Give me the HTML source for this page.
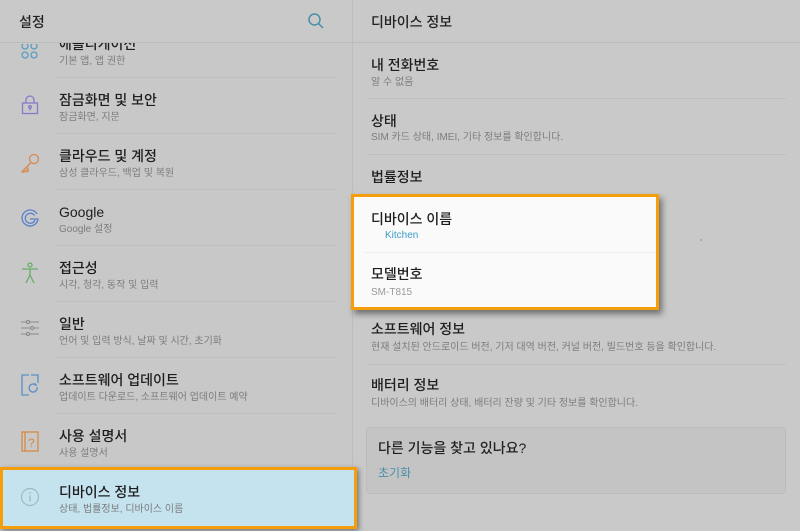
<!DOCTYPE html>
<html><head><meta charset="utf-8"><style>
*{margin:0;padding:0;box-sizing:border-box}
body{width:800px;height:531px;overflow:hidden;background:#c9c9c9;font-family:"Liberation Sans","Noto Sans CJK KR",sans-serif;position:relative}
.a{position:absolute;white-space:nowrap}
.t{font-size:14px;line-height:18px;padding-top:1px;color:#1e1e1e;font-weight:500}
.s{font-size:10px;line-height:13px;padding-top:2px;color:#7d7d7d}
.ln{position:absolute;height:1px;background:#bfbfbf}
.ic{position:absolute}
</style></head><body>
<div class="a" style="left:0;top:0;width:352px;height:531px;background:#c8c8c8"></div>
<div class="a" style="left:352px;top:0;width:1px;height:531px;background:#bdbdbd"></div>
<div class="a" style="left:0;top:43px;width:352px;height:488px;overflow:hidden">
 <div class="a t" style="left:59px;top:-9px">애플리케이션</div>
</div>
<div class="a" style="left:0;top:0;width:352px;height:43px;background:#c9c9c9;border-bottom:1px solid #bcbcbc"></div>
<div class="a" style="left:353px;top:0;width:447px;height:43px;background:#c9c9c9;border-bottom:1px solid #bcbcbc"></div>
<div class="a" style="left:19px;top:13px;font-size:14px;line-height:18px;color:#222;font-weight:500">설정</div>
<svg class="ic" style="left:307px;top:12px" width="18" height="18" viewBox="0 0 18 18"><circle cx="7.5" cy="7.5" r="5.5" fill="none" stroke="#4a8fa8" stroke-width="1.5"/><path d="M11.5 11.5L16 16" stroke="#4a8fa8" stroke-width="1.5"/></svg>
<div class="a" style="left:371px;top:13px;font-size:14px;line-height:18px;color:#222;font-weight:500">디바이스 정보</div>

<div class="a s" style="left:59px;top:53px">기본 앱, 앱 권한</div>
<svg class="ic" style="left:21px;top:44px" width="18" height="16"><g fill="none" stroke="#5a9dc0" stroke-width="1.3"><circle cx="4" cy="2" r="3"/><circle cx="13" cy="2" r="3"/><circle cx="4" cy="11" r="3"/><circle cx="13" cy="11" r="3"/></g></svg>
<div class="ln" style="left:56px;top:77px;width:280px"></div>
<div class="a t" style="left:59px;top:90px">잠금화면 및 보안</div><div class="a s" style="left:59px;top:109px">잠금화면, 지문</div>
<svg class="ic" style="left:21px;top:95px" width="18" height="20"><g fill="none" stroke="#8a78c8" stroke-width="1.3"><path d="M5 8V5a4 4 0 0 1 8 0v3"/><rect x="1.5" y="8" width="15" height="10.5"/><circle cx="9" cy="12" r="1.3"/><path d="M9 13v2.5"/></g></svg>
<div class="ln" style="left:56px;top:133px;width:280px"></div>
<div class="a t" style="left:59px;top:146px">클라우드 및 계정</div><div class="a s" style="left:59px;top:165px">삼성 클라우드, 백업 및 복원</div>
<svg class="ic" style="left:20px;top:153px" width="20" height="20"><g fill="none" stroke="#d48a55" stroke-width="1.3"><circle cx="14" cy="6" r="4.5"/><path d="M11 9.5L2 18.5l1.5 1 2-2 1.5 1.5 1.5-1.5-1.5-1.5 1.5-1.5"/></g></svg>
<div class="ln" style="left:56px;top:189px;width:280px"></div>
<div class="a t" style="left:59px;top:202px">Google</div><div class="a s" style="left:59px;top:221px">Google 설정</div>
<svg class="ic" style="left:20px;top:208px" width="20" height="20" viewBox="0 0 20 20"><g fill="none" stroke="#5a80c8" stroke-width="1.3"><path d="M17 6A8 8 0 1 0 18 11H10"/><path d="M14.5 7.5A5 5 0 1 0 15 12"/></g></svg>
<div class="ln" style="left:56px;top:245px;width:280px"></div>
<div class="a t" style="left:59px;top:258px">접근성</div><div class="a s" style="left:59px;top:277px">시각, 청각, 동작 및 입력</div>
<svg class="ic" style="left:20px;top:262px" width="20" height="22"><g fill="none" stroke="#6aaa6a" stroke-width="1.3"><circle cx="10" cy="3" r="2"/><path d="M2 7h16M10 7v6M6 21l4-8 4 8"/></g></svg>
<div class="ln" style="left:56px;top:301px;width:280px"></div>
<div class="a t" style="left:59px;top:314px">일반</div><div class="a s" style="left:59px;top:333px">언어 및 입력 방식, 날짜 및 시간, 초기화</div>
<svg class="ic" style="left:20px;top:319px" width="20" height="18"><g fill="none" stroke="#8a8a8a" stroke-width="1.1"><path d="M1 3h18M1 9h18M1 15h18"/><circle cx="8" cy="3" r="1.6" fill="#c8c8c8"/><circle cx="12" cy="9" r="1.6" fill="#c8c8c8"/><circle cx="8" cy="15" r="1.6" fill="#c8c8c8"/></g></svg>
<div class="ln" style="left:56px;top:357px;width:280px"></div>
<div class="a t" style="left:59px;top:370px">소프트웨어 업데이트</div><div class="a s" style="left:59px;top:389px">업데이트 다운로드, 소프트웨어 업데이트 예약</div>
<svg class="ic" style="left:21px;top:374px" width="18" height="22"><g fill="none" stroke="#5a90c8" stroke-width="1.3"><path d="M8 1H1v20h7M10 1h7v8"/><path d="M16 13a4 4 0 1 1-2-2.5"/><path d="M14 9l0 2 2 0"/></g></svg>
<div class="ln" style="left:56px;top:413px;width:280px"></div>
<div class="a t" style="left:59px;top:426px">사용 설명서</div><div class="a s" style="left:59px;top:445px">사용 설명서</div>
<svg class="ic" style="left:21px;top:431px" width="18" height="22"><g fill="none" stroke="#d48a45" stroke-width="1.3"><rect x="1" y="1" width="16" height="19"/><path d="M4 1v19"/></g><text x="7" y="16" font-size="12" fill="#d48a45" font-family="Liberation Sans">?</text></svg>

<div class="a" style="left:0;top:467px;width:357px;height:62px;background:#c4e3ef;border:3px solid #f59e0b;box-shadow:2px 2px 5px rgba(0,0,0,.4)"></div>
<div class="a t" style="left:59px;top:482px">디바이스 정보</div><div class="a s" style="left:59px;top:501px">상태, 법률정보, 디바이스 이름</div>
<svg class="ic" style="left:20px;top:487px" width="20" height="20"><circle cx="10" cy="10" r="8.5" fill="none" stroke="#a0b8c0" stroke-width="1.2"/><path d="M10 8.5v6" stroke="#a0b8c0" stroke-width="1.3"/><circle cx="10" cy="6" r=".9" fill="#a0b8c0"/></svg>

<div class="a t" style="left:371px;top:55px">내 전화번호</div><div class="a s" style="left:371px;top:74px">알 수 없음</div>
<div class="ln" style="left:368px;top:98px;width:418px"></div>
<div class="a t" style="left:371px;top:111px">상태</div><div class="a s" style="left:371px;top:129px">SIM 카드 상태, IMEI, 기타 정보를 확인합니다.</div>
<div class="ln" style="left:368px;top:154px;width:418px"></div>
<div class="a t" style="left:371px;top:167px">법률정보</div>
<div class="a" style="left:700px;top:239px;width:2px;height:2px;background:#aaa"></div>
<div class="a t" style="left:371px;top:319px">소프트웨어 정보</div><div class="a s" style="left:371px;top:339px">현재 설치된 안드로이드 버전, 기저 대역 버전, 커널 버전, 빌드번호 등을 확인합니다.</div>
<div class="ln" style="left:368px;top:364px;width:418px"></div>
<div class="a t" style="left:371px;top:375px">배터리 정보</div><div class="a s" style="left:371px;top:395px">디바이스의 배터리 상태, 배터리 잔량 및 기타 정보를 확인합니다.</div>
<div class="a" style="left:366px;top:427px;width:420px;height:67px;background:#c4c4c4;border:1px solid #bcbcbc;border-radius:4px"></div>
<div class="a" style="left:378px;top:439px;font-size:14px;line-height:18px;color:#222;font-weight:500">다른 기능을 찾고 있나요?</div>
<div class="a" style="left:378px;top:466px;font-size:12px;line-height:15px;color:#4a8fa8">초기화</div>

<div class="a" style="left:351px;top:194px;width:308px;height:116px;background:#fafafa;border:3px solid #f59e0b;box-shadow:3px 4px 6px rgba(0,0,0,.45)"></div>
<div class="a t" style="left:371px;top:209px">디바이스 이름</div>
<div class="a" style="left:385px;top:229px;font-size:10px;line-height:13px;color:#3a9cc8">Kitchen</div>
<div class="a" style="left:365px;top:252px;width:291px;height:1px;background:#ececec"></div>
<div class="a t" style="left:371px;top:264px">모델번호</div>
<div class="a s" style="left:371px;top:284px;color:#999">SM-T815</div>
</body></html>
